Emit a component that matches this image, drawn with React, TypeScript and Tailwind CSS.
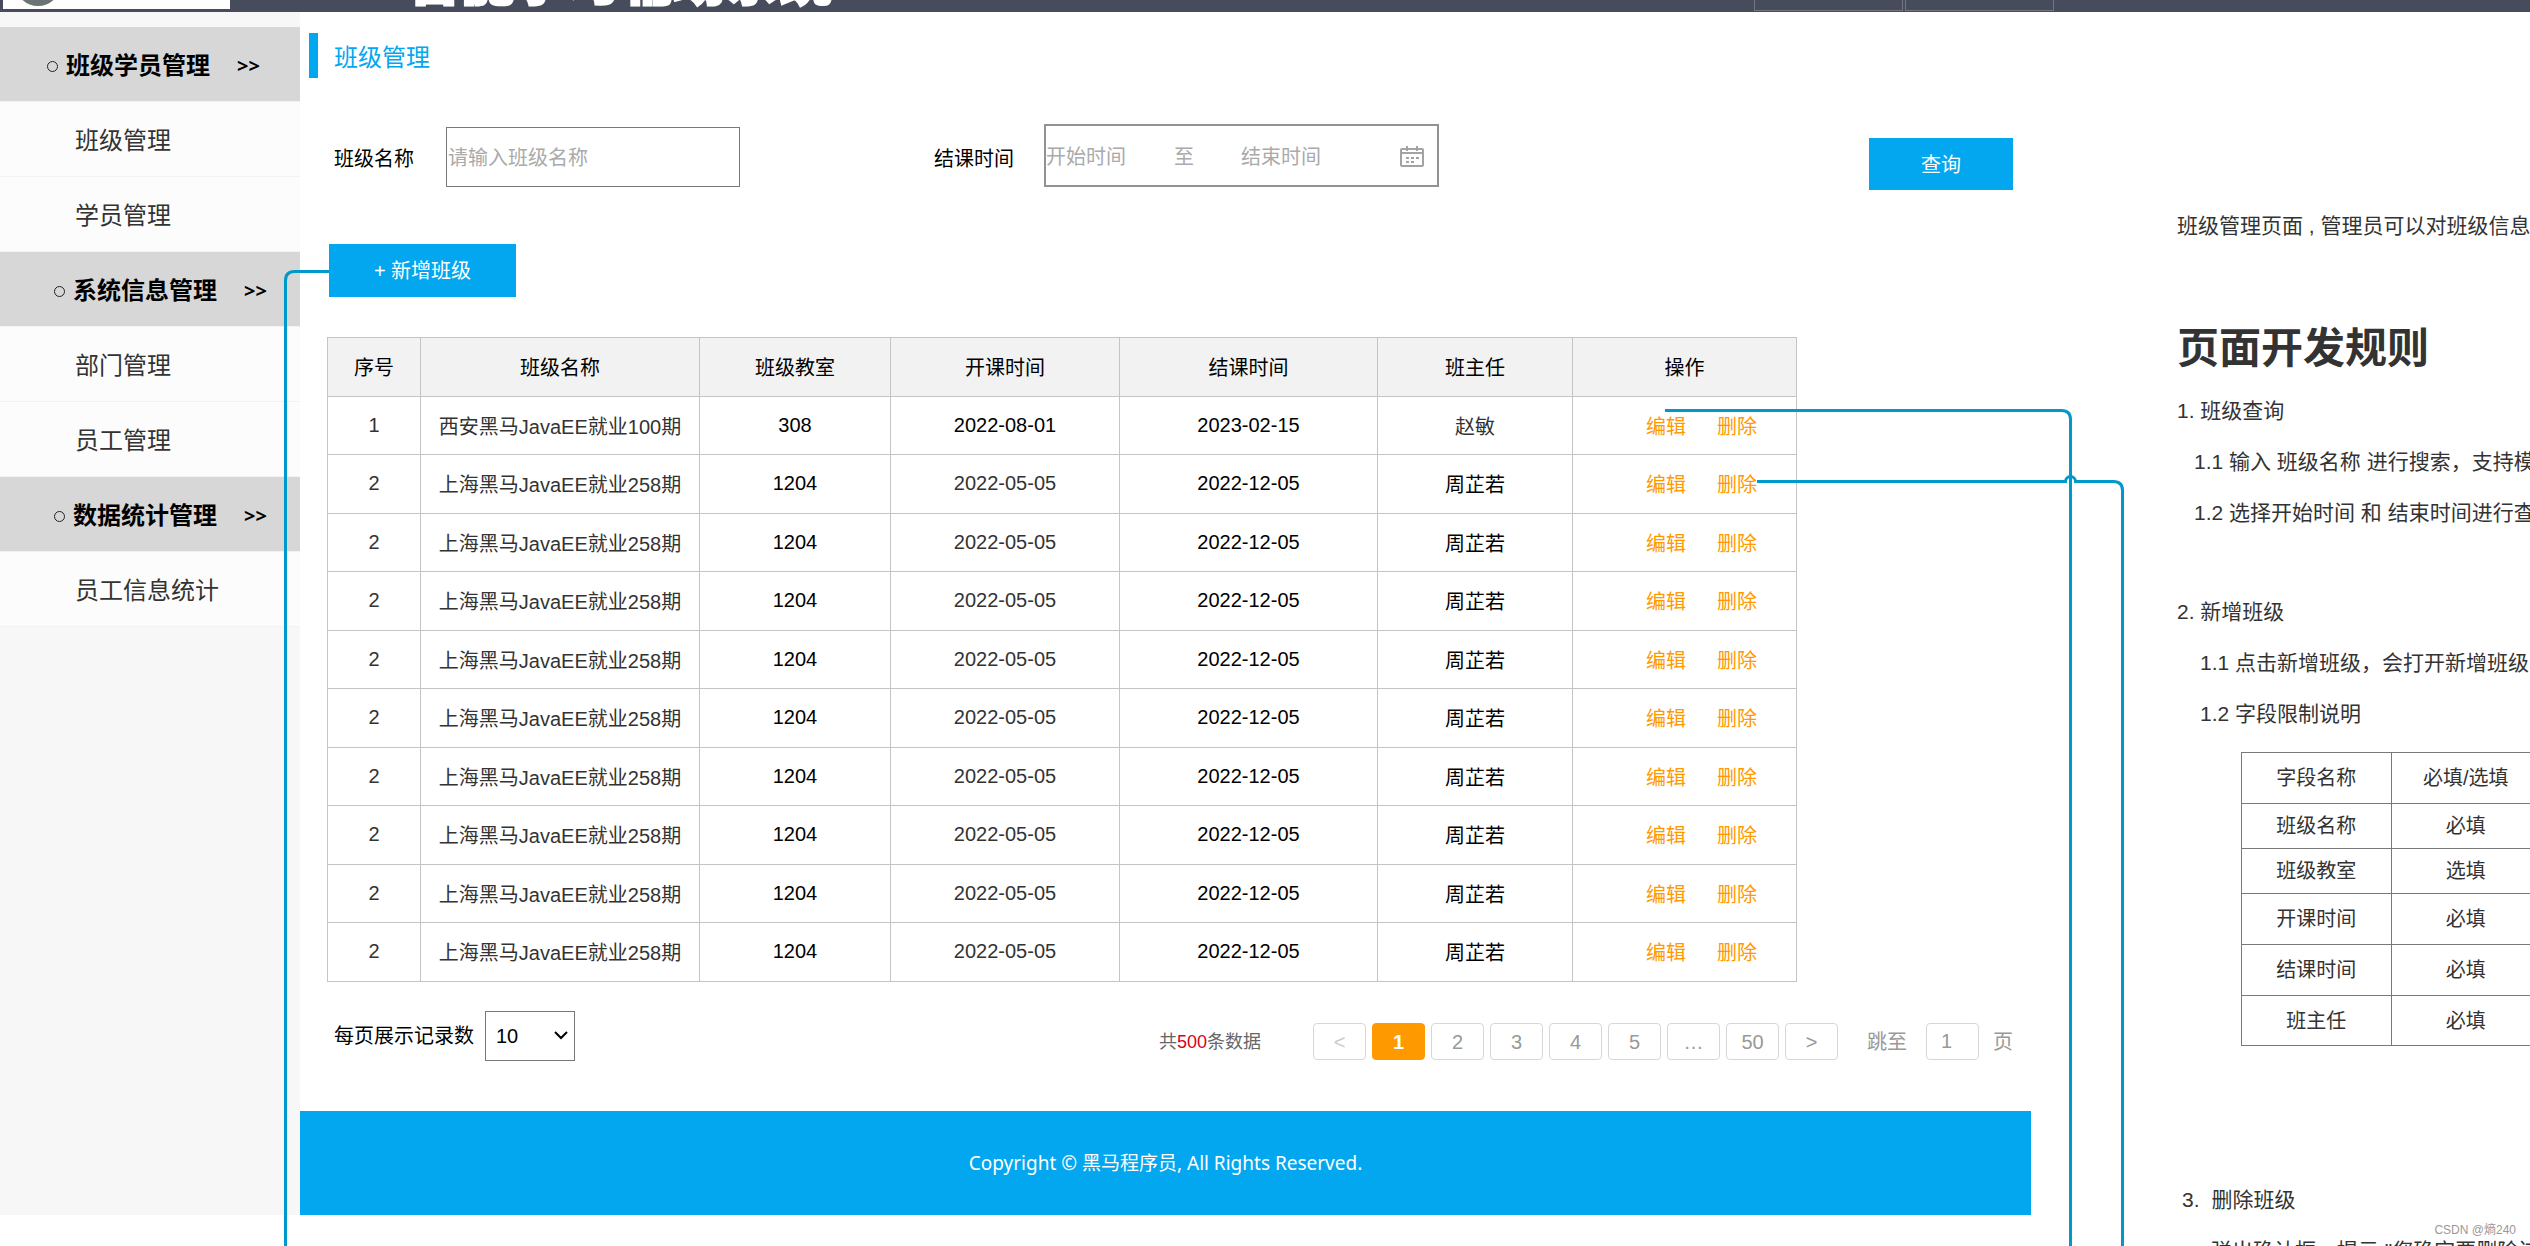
import clsx from "clsx";

const menu = [
  { title: "班级学员管理", items: ["班级管理", "学员管理"] },
  { title: "系统信息管理", items: ["部门管理", "员工管理"] },
  { title: "数据统计管理", items: ["员工信息统计"] },
];

const first = { no: "1", name: "西安黑马JavaEE就业100期", room: "308", start: "2022-08-01", end: "2023-02-15", teacher: "赵敏" };
const other = { no: "2", name: "上海黑马JavaEE就业258期", room: "1204", start: "2022-05-05", end: "2022-12-05", teacher: "周芷若" };
const rows = [first, ...Array(9).fill(other)];

const columns = ["序号", "班级名称", "班级教室", "开课时间", "结课时间", "班主任", "操作"];

const pages = ["1", "2", "3", "4", "5", "…", "50"];

const fields = [
  { name: "班级名称", rule: "必填", height: "h-[45px]" },
  { name: "班级教室", rule: "选填", height: "h-[45px]" },
  { name: "开课时间", rule: "必填", height: "h-[51px]" },
  { name: "结课时间", rule: "必填", height: "h-[51px]" },
  { name: "班主任", rule: "必填", height: "h-[50px]" },
];

const Header = () => (
  <header className="flex h-3 items-end overflow-hidden bg-[#474c5c]">
    <div className="mb-[3px] ml-[3px] flex h-16 w-[227px] shrink-0 items-end gap-4 overflow-hidden bg-white pl-3">
      <svg className="mb-[3px] shrink-0" width="46" height="46" viewBox="0 0 46 46" fill="none">
        <circle cx="23" cy="23" r="19" stroke="#6b7474" strokeWidth="8" />
      </svg>
      <span className="mb-[5px] text-base/5 text-[#eeb4b4]">www.itheima.com</span>
    </div>
    <h1 className="mb-[4px] ml-[178px] text-[53px]/[53px] font-black whitespace-nowrap text-white [-webkit-text-stroke:3px_white]">
      智能学习辅助系统
    </h1>
    <div className="mr-[476px] mb-px ml-auto flex gap-[2px]">
      <div className="h-10 w-[149px] border border-[#74757f]" />
      <div className="h-10 w-[149px] border border-[#74757f]" />
    </div>
  </header>
);

const Sidebar = () => (
  <nav className="w-[300px] shrink-0 bg-[#f7f7f7] pt-[15px] text-2xl">
    {menu.map((group, i) => (
      <div key={group.title}>
        <div
          className={clsx(
            "flex h-[75px] items-center border-b border-[#f2f2f2] bg-[#d7d7d7] pt-1 font-bold text-black",
            i === 0 ? "pl-[46px]" : "pl-[53px]"
          )}
        >
          <svg className="mr-[7px]" width="13" height="13" viewBox="0 0 13 13" fill="none">
            <circle cx="6.5" cy="6.5" r="5" stroke="#222" />
          </svg>
          <span>{group.title}</span>
          <span className="ml-[27px] font-[Open_Sans] text-xl">&gt;&gt;</span>
        </div>
        {group.items.map((item) => (
          <a
            key={item}
            href="#"
            className="flex h-[75px] items-center border-b border-[#f2f2f2] bg-[#fcfcfc] pt-1 pl-[75px] text-[#333]"
          >
            {item}
          </a>
        ))}
      </div>
    ))}
  </nav>
);

const CalendarIcon = () => (
  <svg className="mr-[12px] shrink-0" width="26" height="24" viewBox="0 0 26 24" fill="none" stroke="#a3a3a3">
    <rect x="2" y="4" width="22" height="17" rx="1" strokeWidth="2" />
    <path d="M2 8h22M8 1v5M18 1v5" strokeWidth="2" />
    <path d="M7 13h3M12 13h3M17 13h3M7 17h3M12 17h3" strokeWidth="2" />
  </svg>
);

const SearchForm = () => (
  <form className="flex h-[66px] items-start pl-[34px]" onSubmit={(e) => e.preventDefault()}>
    <label htmlFor="name" className="mt-[21px] w-[112px] leading-[28px]">
      班级名称
    </label>
    <input
      id="name"
      placeholder="请输入班级名称"
      className="mt-[3px] h-[60px] w-[294px] border border-[#797979] px-px pt-[2px] placeholder:text-[#aaa]"
    />
    <label htmlFor="start" className="mt-[21px] ml-[194px] w-[110px] leading-[28px]">
      结课时间
    </label>
    <div className="flex h-[63px] w-[395px] items-center border-2 border-[#929292] pt-[3px]">
      <input id="start" placeholder="开始时间" className="w-[128px] placeholder:text-[#aaa]" />
      <span className="w-[67px] text-[#aaa]">至</span>
      <input aria-label="结束时间" placeholder="结束时间" className="w-[100px] placeholder:text-[#aaa]" />
      <div className="ml-auto">
        <CalendarIcon />
      </div>
    </div>
    <button type="submit" className="mt-[14px] mr-[18px] ml-auto h-[52px] w-[144px] bg-[#02a7f0] pt-[2px] text-white">
      查询
    </button>
  </form>
);

const ClassTable = () => (
  <table className="w-full table-fixed border-collapse text-center leading-[24px] text-[#333]">
    <colgroup>
      <col className="w-[93px]" />
      <col className="w-[279px]" />
      <col className="w-[191px]" />
      <col className="w-[229px]" />
      <col className="w-[258px]" />
      <col className="w-[195px]" />
      <col className="w-[224px]" />
    </colgroup>
    <thead>
      <tr className="h-[59px] bg-[#f2f2f2] text-black">
        {columns.map((column) => (
          <th key={column} className="border border-[#c4c4c4] pt-px font-normal">
            {column}
          </th>
        ))}
      </tr>
    </thead>
    <tbody>
      {rows.map((row, i) => (
        <tr key={i} className="odd:h-[58px] even:h-[59px]">
          <td className="border border-[#c4c4c4] pb-[2px]">{row.no}</td>
          <td className="border border-[#c4c4c4] pt-[2px]">{row.name}</td>
          <td className="border border-[#c4c4c4] pb-[2px] text-black">{row.room}</td>
          <td className={clsx("border border-[#c4c4c4] pb-[2px]", i === 0 && "text-black")}>{row.start}</td>
          <td className="border border-[#c4c4c4] pb-[2px] text-black">{row.end}</td>
          <td className={clsx("border border-[#c4c4c4] pt-[2px]", i > 0 && "text-black")}>{row.teacher}</td>
          <td className="border border-[#c4c4c4] pt-[2px] pl-[34px] text-[#ff9900]">
            <a href="#" className="mr-[31px]">编辑</a>
            <a href="#">删除</a>
          </td>
        </tr>
      ))}
    </tbody>
  </table>
);

const Pagination = () => (
  <div className="flex items-center text-[#999]">
    <p className="mr-[52px] text-lg text-[#666]">
      共<span className="text-[#d9001b]">500</span>条数据
    </p>
    <div className="flex gap-[6px]">
      <button className="h-[37px] w-[53px] rounded border border-[#d7d7d7] text-[#ccc]">&lt;</button>
      {pages.map((page) => (
        <button
          key={page}
          className={clsx(
            "h-[37px] w-[53px] rounded border",
            page === "1" ? "border-[#ff9900] bg-[#ff9900] font-bold text-white" : "border-[#d7d7d7]"
          )}
        >
          {page}
        </button>
      ))}
      <button className="h-[37px] w-[53px] rounded border border-[#d7d7d7]">&gt;</button>
    </div>
    <label htmlFor="page" className="mr-[19px] ml-[29px]">
      跳至
    </label>
    <input
      id="page"
      defaultValue="1"
      className="mr-[14px] h-[37px] w-[53px] rounded border border-[#d7d7d7] pr-3 text-center"
    />
    <span>页</span>
  </div>
);

const Main = () => (
  <main className="flex min-w-0 flex-1 flex-col pt-[21px] text-black">
    <h2 className="ml-[9px] flex h-[45px] items-center border-l-9 border-[#02a7f0] pt-1 pl-4 text-2xl text-[#02a7f0]">
      班级管理
    </h2>
    <div className="mt-[46px]">
      <SearchForm />
    </div>
    <div className="mt-[54px] pl-[29px]">
      <button className="h-[53px] w-[187px] bg-[#02a7f0] pt-px text-white">+ 新增班级</button>
    </div>
    <div className="mt-[40px] mr-[234px] ml-[27px]">
      <ClassTable />
    </div>
    <div className="mt-[29px] flex items-start pr-[18px] pl-[34px]">
      <label htmlFor="size" className="mr-[11px] py-[11px] leading-[28px]">
        每页展示记录数
      </label>
      <div className="relative">
        <select id="size" className="h-[50px] w-[90px] appearance-none border border-[#797979] bg-white pl-[10px]">
          <option>10</option>
        </select>
        <svg
          className="pointer-events-none absolute top-[19px] right-[6px]"
          width="16"
          height="12"
          viewBox="0 0 16 12"
          fill="none"
        >
          <path d="M2 2l6 6 6-6" stroke="#000" strokeWidth="2" />
        </svg>
      </div>
      <div className="mt-[12px] ml-auto">
        <Pagination />
      </div>
    </div>
    <footer className="mt-[50px] flex h-[104px] items-center justify-center bg-[#02a7f0] font-[Noto_Sans,Noto_Sans_CJK_SC,sans-serif] text-[19px] text-white">
      Copyright © 黑马程序员, All Rights Reserved.
    </footer>
  </main>
);

const Rules = () => (
  <aside className="w-[499px] shrink-0 overflow-hidden pl-[146px] text-[21px]/[51px] whitespace-nowrap text-[#333]">
    <p className="mt-[188px]">班级管理页面 , 管理员可以对班级信息进行管理</p>
    <h2 className="mt-[66px] text-[42px]/[64px] font-bold">页面开发规则</h2>
    <h3 className="mt-[4px]">1. 班级查询</h3>
    <p className="pl-[17px]">1.1 输入 班级名称 进行搜索，支持模糊查询</p>
    <p className="pl-[17px]">1.2 选择开始时间 和 结束时间进行查询</p>
    <h3 className="mt-[48px]">2. 新增班级</h3>
    <p className="pl-[23px]">1.1 点击新增班级，会打开新增班级的页面</p>
    <p className="pl-[23px]">1.2 字段限制说明</p>
    <table className="mt-[13px] ml-[64px] w-[300px] table-fixed border-collapse text-center text-xl/[28px]">
      <thead>
        <tr className="h-[51px]">
          <th className="border border-[#797979] font-normal">字段名称</th>
          <th className="border border-[#797979] font-normal">必填/选填</th>
        </tr>
      </thead>
      <tbody>
        {fields.map((field) => (
          <tr key={field.name} className={field.height}>
            <td className="border border-[#797979]">{field.name}</td>
            <td className="border border-[#797979]">{field.rule}</td>
          </tr>
        ))}
      </tbody>
    </table>
    <h3 className="mt-[128px] pl-[5px]">
      3.<span className="ml-[12px]">删除班级</span>
    </h3>
    <p className="pl-[34px]">弹出确认框，提示 "您确定要删除该班级吗"</p>
  </aside>
);

// Flow lines that lead from the buttons to the pages they open
const Connectors = () => (
  <svg
    className="pointer-events-none absolute top-0 left-0"
    width="2530"
    height="1246"
    viewBox="0 0 2530 1246"
    fill="none"
    stroke="#0099cc"
    strokeWidth="3"
  >
    <path d="M329 271.5H294.5q-9 0-9 9V1246" />
    <path d="M1665 410.5H2061.5q9 0 9 9V1246" />
    <path d="M1757 481.5H2065.5a5 5 0 0 1 10 0H2113.5q9 0 9 9V1246" />
  </svg>
);

const App = () => {
  return (
    <div className="relative h-screen overflow-hidden bg-white font-[Liberation_Sans,Noto_Sans_CJK_SC,sans-serif] text-xl">
      <Header />
      <div className="flex items-start">
        <div className="flex min-w-0 flex-1">
          <Sidebar />
          <Main />
        </div>
        <Rules />
      </div>
      <Connectors />
      <p className="absolute right-[14px] bottom-[6px] text-xs/5 text-[#999]">CSDN @熵240</p>
    </div>
  );
};

export default App;
